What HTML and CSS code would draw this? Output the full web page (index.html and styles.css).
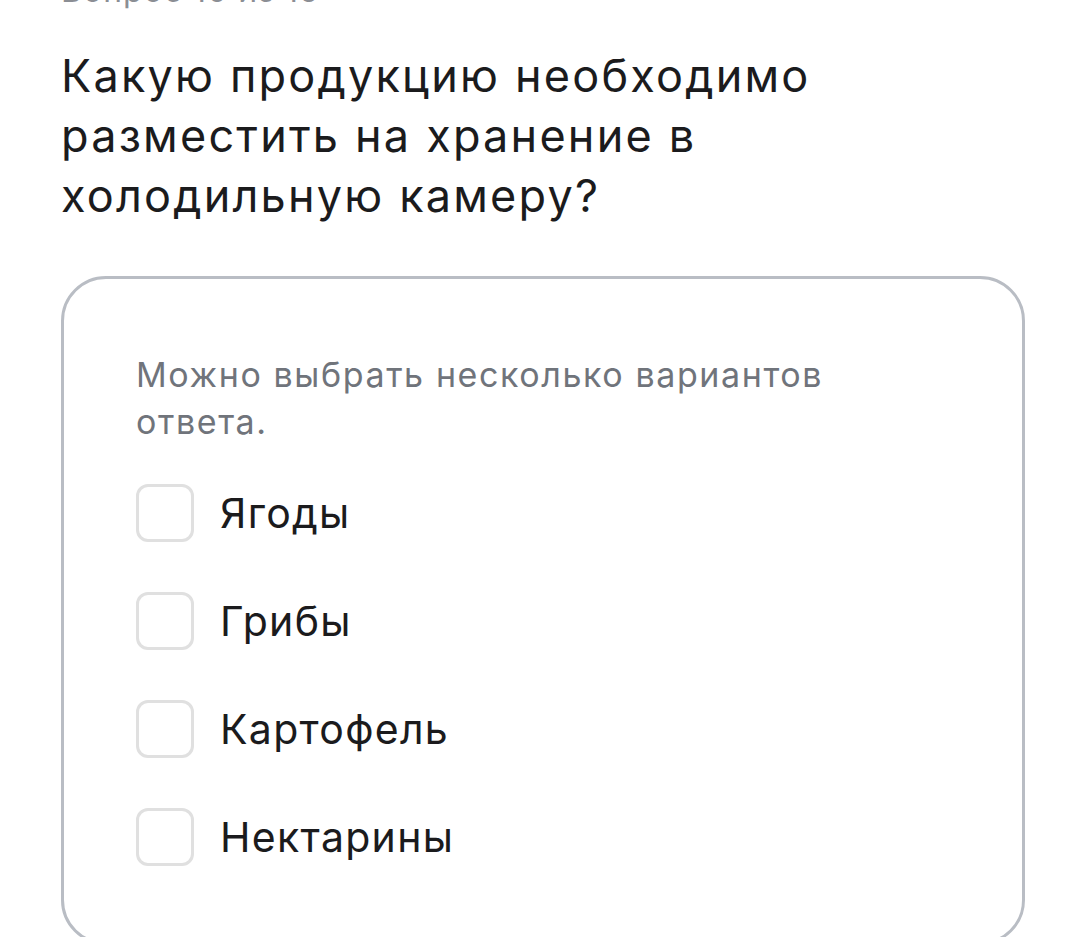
FILE: index.html
```html
<!DOCTYPE html>
<html lang="ru">
<head>
    <meta charset="utf-8" />
    <title>Тест</title>
    <link rel="stylesheet" href="styles.css">
</head>
<body>
    <div class="quiz">
        <div class="counter">Вопрос 10 из 15</div>
        <h1 class="question">Какую продукцию необходимо разместить на хранение в холодильную камеру?</h1>

        <div class="card">
            <p class="hint">Можно выбрать несколько вариантов ответа.</p>
            <ul class="options">
                <li class="option"><span class="box"></span>Ягоды</li>
                <li class="option"><span class="box"></span>Грибы</li>
                <li class="option"><span class="box"></span>Картофель</li>
                <li class="option"><span class="box"></span>Нектарины</li>
            </ul>
        </div>
    </div>
</body>
</html>
```

FILE: styles.css
```css
* {
    margin: 0;
    padding: 0;
    box-sizing: border-box;
}

html {
    font-family: Inter, 'Noto Sans', sans-serif;
    background: #fff;
    color: #1b1b1d;
}

body {
    overflow: hidden;
}

.quiz {
    padding: 0 60px 0 61px;
    margin-top: -26px;
}

.counter {
    font-size: 32px;
    line-height: 34px;
    letter-spacing: 1px;
    color: #8b8e94;
}

.question {
    font-size: 45px;
    font-weight: 400;
    line-height: 60px;
    letter-spacing: 2.2px;
    margin-top: 38px;
    width: 820px;
}

/* карточка с вариантами ответа */
.card {
    margin-top: 50px;
    border: 3px solid #b9bdc4;
    border-radius: 45px;
    padding: 72px 60px 76px 72px;
}

.hint {
    font-size: 34px;
    line-height: 47px;
    letter-spacing: 1.6px;
    color: #70747b;
    width: 760px;
}

.options {
    list-style: none;
    margin-top: 39px;
    display: flex;
    flex-direction: column;
    gap: 50px;
}

.option {
    display: flex;
    align-items: center;
    gap: 26px;
    height: 58px;
    font-size: 41px;
    letter-spacing: 1.3px;
}

.box {
    width: 58px;
    height: 58px;
    flex: none;
    border: 3px solid #e0e0e0;
    border-radius: 12px;
}
```
